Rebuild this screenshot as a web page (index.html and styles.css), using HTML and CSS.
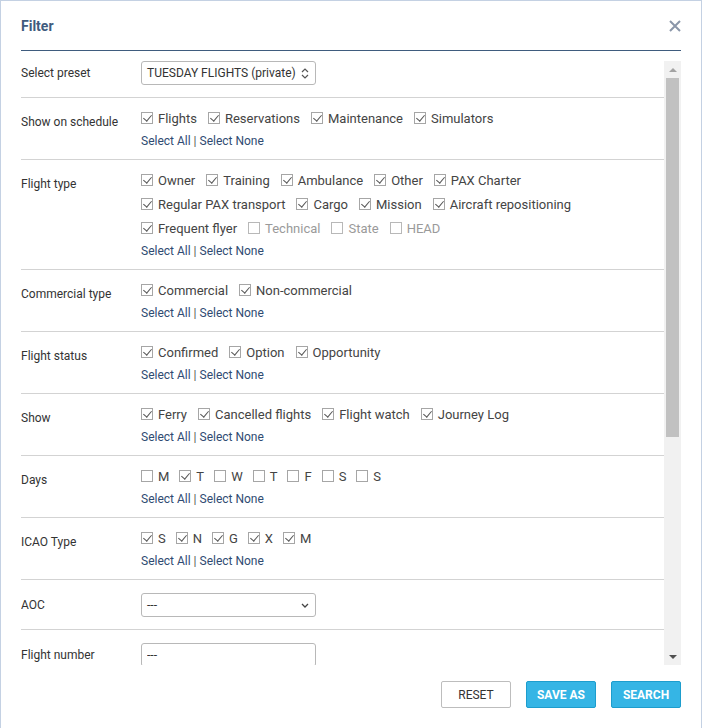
FILE: index.html
```html
<!DOCTYPE html>
<html lang="en">
<head>
  <meta charset="UTF-8" />
  <meta name="viewport" content="width=device-width, initial-scale=1.0" />
  <title>Filter</title>
  <link rel="stylesheet" href="styles.css">
</head>
<body>
  <div class="dialog">
    <div class="dialog-header">
      <h2>Filter</h2>
      <button class="close" type="button" aria-label="Close">
        <svg width="12" height="12" viewBox="0 0 12 12"><path d="M1 1L11 11M11 1L1 11" stroke="currentColor" stroke-width="2" fill="none"/></svg>
      </button>
    </div>

    <div class="dialog-body">
      <div class="rows">
        <div class="row row-field first">
          <div class="row-label">Select preset</div>
          <div class="select">
            <span>TUESDAY FLIGHTS (private)</span>
            <svg width="8" height="11" viewBox="0 0 8 11"><path d="M1 4L4 1L7 4M1 7L4 10L7 7" stroke="#555" stroke-width="1.2" fill="none"/></svg>
          </div>
        </div>

        <div class="row">
          <div class="row-label">Show on schedule</div>
          <div class="row-options">
            <div class="option-line">
              <label class="check"><span class="box on"></span>Flights</label>
              <label class="check"><span class="box on"></span>Reservations</label>
              <label class="check"><span class="box on"></span>Maintenance</label>
              <label class="check"><span class="box on"></span>Simulators</label>
            </div>
            <div class="select-links"><a href="#">Select All</a> | <a href="#">Select None</a></div>
          </div>
        </div>

        <div class="row">
          <div class="row-label">Flight type</div>
          <div class="row-options">
            <div class="option-line">
              <label class="check"><span class="box on"></span>Owner</label>
              <label class="check"><span class="box on"></span>Training</label>
              <label class="check"><span class="box on"></span>Ambulance</label>
              <label class="check"><span class="box on"></span>Other</label>
              <label class="check"><span class="box on"></span>PAX Charter</label>
            </div>
            <div class="option-line">
              <label class="check"><span class="box on"></span>Regular PAX transport</label>
              <label class="check"><span class="box on"></span>Cargo</label>
              <label class="check"><span class="box on"></span>Mission</label>
              <label class="check"><span class="box on"></span>Aircraft repositioning</label>
            </div>
            <div class="option-line">
              <label class="check"><span class="box on"></span>Frequent flyer</label>
              <label class="check disabled"><span class="box"></span>Technical</label>
              <label class="check disabled"><span class="box"></span>State</label>
              <label class="check disabled"><span class="box"></span>HEAD</label>
            </div>
            <div class="select-links"><a href="#">Select All</a> | <a href="#">Select None</a></div>
          </div>
        </div>

        <div class="row">
          <div class="row-label">Commercial type</div>
          <div class="row-options">
            <div class="option-line">
              <label class="check"><span class="box on"></span>Commercial</label>
              <label class="check"><span class="box on"></span>Non-commercial</label>
            </div>
            <div class="select-links"><a href="#">Select All</a> | <a href="#">Select None</a></div>
          </div>
        </div>

        <div class="row">
          <div class="row-label">Flight status</div>
          <div class="row-options">
            <div class="option-line">
              <label class="check"><span class="box on"></span>Confirmed</label>
              <label class="check"><span class="box on"></span>Option</label>
              <label class="check"><span class="box on"></span>Opportunity</label>
            </div>
            <div class="select-links"><a href="#">Select All</a> | <a href="#">Select None</a></div>
          </div>
        </div>

        <div class="row">
          <div class="row-label">Show</div>
          <div class="row-options">
            <div class="option-line">
              <label class="check"><span class="box on"></span>Ferry</label>
              <label class="check"><span class="box on"></span>Cancelled flights</label>
              <label class="check"><span class="box on"></span>Flight watch</label>
              <label class="check"><span class="box on"></span>Journey Log</label>
            </div>
            <div class="select-links"><a href="#">Select All</a> | <a href="#">Select None</a></div>
          </div>
        </div>

        <div class="row">
          <div class="row-label">Days</div>
          <div class="row-options">
            <div class="option-line short">
              <label class="check"><span class="box"></span>M</label>
              <label class="check"><span class="box on"></span>T</label>
              <label class="check"><span class="box"></span>W</label>
              <label class="check"><span class="box"></span>T</label>
              <label class="check"><span class="box"></span>F</label>
              <label class="check"><span class="box"></span>S</label>
              <label class="check"><span class="box"></span>S</label>
            </div>
            <div class="select-links"><a href="#">Select All</a> | <a href="#">Select None</a></div>
          </div>
        </div>

        <div class="row">
          <div class="row-label">ICAO Type</div>
          <div class="row-options">
            <div class="option-line short">
              <label class="check"><span class="box on"></span>S</label>
              <label class="check"><span class="box on"></span>N</label>
              <label class="check"><span class="box on"></span>G</label>
              <label class="check"><span class="box on"></span>X</label>
              <label class="check"><span class="box on"></span>M</label>
            </div>
            <div class="select-links"><a href="#">Select All</a> | <a href="#">Select None</a></div>
          </div>
        </div>

        <div class="row row-field">
          <div class="row-label">AOC</div>
          <div class="select">
            <span>---</span>
            <svg width="8" height="5" viewBox="0 0 8 5"><path d="M1 1L4 4L7 1" stroke="#444" stroke-width="1.3" fill="none"/></svg>
          </div>
        </div>

        <div class="row row-field">
          <div class="row-label">Flight number</div>
          <input class="text-input" type="text" value="---" />
        </div>
      </div>

      <div class="scrollbar">
        <span class="arrow arrow-up"></span>
        <span class="track"><span class="thumb"></span></span>
        <span class="arrow arrow-down"></span>
      </div>
    </div>

    <div class="dialog-footer">
      <button class="btn btn-plain" type="button">Reset</button>
      <button class="btn btn-primary" type="button">Save as</button>
      <button class="btn btn-primary" type="button">Search</button>
    </div>
  </div>
</body>
</html>
```

FILE: styles.css
```css
* {
  box-sizing: border-box;
  margin: 0;
  padding: 0;
}

body {
  background: #ffffff;
  font-family: Roboto, 'Liberation Sans', sans-serif;
  font-size: 12px;
  color: #333333;
}

.dialog {
  height: 728px;
  border: 1px solid #c4d1e3;
  border-bottom: none;
  padding: 0 20px;
  overflow: hidden;
}

/* header */
.dialog-header {
  height: 50px;
  border-bottom: 1px solid #3f5c7e;
  display: flex;
  align-items: center;
  justify-content: space-between;
}

.dialog-header h2 {
  font-size: 14px;
  font-weight: 700;
  color: #3f5b7e;
  padding-top: 1px;
}

.close {
  border: none;
  background: transparent;
  color: #8a96a9;
  width: 12px;
  height: 12px;
  display: flex;
  cursor: pointer;
}

.dialog-body {
  margin-top: 10px;
  height: 604px;
  display: flex;
}

.rows {
  flex: 1;
  overflow: hidden;
}

.row {
  display: grid;
  grid-template-columns: 120px 1fr;
  padding: 8px 0 9px;
  border-bottom: 1px solid #d3d3d3;
}

.row-label {
  line-height: 24px;
  padding-top: 4px;
  color: #333333;
}

.row-field {
  align-items: center;
  padding: 13px 0 12px;
}

.row-field .row-label {
  padding-top: 0;
}

.row-field.first {
  padding-top: 0;
}

.option-line {
  display: flex;
  flex-wrap: wrap;
  column-gap: 11px;
  height: 24px;
  align-items: center;
  font-size: 13px;
}

.option-line.short {
  column-gap: 10px;
}

.check {
  display: flex;
  align-items: center;
  gap: 5px;
  color: #444444;
  white-space: nowrap;
}

.check.disabled {
  color: #9a9a9a;
}

.box {
  width: 12px;
  height: 12px;
  border: 1px solid #a6a6a6;
  background: #ffffff;
  position: relative;
}

.check.disabled .box {
  border-color: #b8b8b8;
}

.box.on::after {
  content: '';
  position: absolute;
  left: 3px;
  top: 0px;
  width: 4px;
  height: 7px;
  border-right: 1.5px solid #555555;
  border-bottom: 1.5px solid #555555;
  transform: rotate(40deg);
}

.select-links {
  height: 20px;
  line-height: 22px;
  color: #555555;
}

.select-links a {
  color: #2f4b72;
  text-decoration: none;
}

.select-links a:hover {
  text-decoration: underline;
}

.select,
.text-input {
  width: 175px;
  height: 24px;
  border: 1px solid #b8b8b8;
  border-radius: 3px;
  padding: 0 6px 0 5px;
  font-family: inherit;
  font-size: 12px;
  color: #333333;
  background: #ffffff;
  white-space: nowrap;
}

.select {
  display: flex;
  align-items: center;
  justify-content: space-between;
}

.text-input {
  outline: none;
}

/* scrollbar drawn beside the rows */
.scrollbar {
  width: 17px;
  background: #f1f1f1;
  display: flex;
  flex-direction: column;
}

.arrow {
  height: 17px;
  display: flex;
  align-items: center;
  justify-content: center;
}

.arrow::before {
  content: '';
  border-left: 4px solid transparent;
  border-right: 4px solid transparent;
}

.arrow-up::before {
  border-bottom: 4px solid #a3a3a3;
}

.arrow-down::before {
  border-top: 4px solid #505050;
}

.track {
  flex: 1;
  padding: 0 2px;
}

.thumb {
  display: block;
  height: 359px;
  background: #c1c1c1;
}

/* footer buttons */
.dialog-footer {
  display: flex;
  justify-content: flex-end;
  gap: 15px;
  padding-top: 16px;
}

.btn {
  width: 70px;
  height: 27px;
  font-family: inherit;
  font-size: 12px;
  text-transform: uppercase;
  border-radius: 2px;
  cursor: pointer;
}

.btn-plain {
  background: #ffffff;
  border: 1px solid #bdbdbd;
  color: #333333;
}

.btn-primary {
  background: #35b5e5;
  border: 1px solid #1d9dcd;
  color: #ffffff;
  font-weight: 700;
}

.btn-primary:hover {
  background: #23a4d6;
}
```
